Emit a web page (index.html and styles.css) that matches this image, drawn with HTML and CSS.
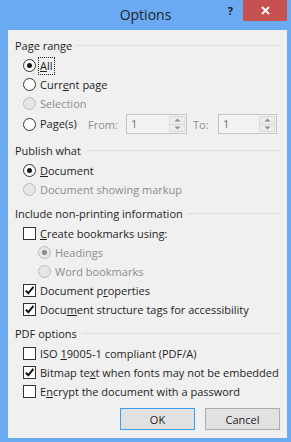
FILE: index.html
```html
<!DOCTYPE html>
<html>
<head>
<meta charset="utf-8">
<link rel="stylesheet" href="styles.css">
</head>
<body>
<div class="window">
  <div class="titlebar">
    <div class="title">Options</div>
    <div class="controls">
      <span class="help">?</span>
      <span class="close"><svg width="9" height="9" viewBox="0 0 9 9"><path d="M1 1L8 8M8 1L1 8" stroke="#fff" stroke-width="1.8"/></svg></span>
    </div>
  </div>
  <div class="client">
    <section class="group">
      <div class="group-head"><span>Page range</span><span class="rule"></span></div>
      <div class="row"><span class="radio checked"></span><span class="label focus"><u>A</u>ll</span></div>
      <div class="row"><span class="radio"></span><span class="label">Curr<u>e</u>nt page</span></div>
      <div class="row disabled"><span class="radio"></span><span class="label">Selection</span></div>
      <div class="row pages">
        <span class="radio"></span><span class="label pages-label">Pa<u>g</u>e(s)</span>
        <span class="dim from">From:</span>
        <span class="spin from-box"><span class="val">1</span><span class="btns"><span class="btn"><svg width="7" height="4" viewBox="0 0 7 4"><path d="M0.5 3.5L3.5 0.5L6.5 3.5Z" fill="#8e8e8e"/></svg></span><span class="btn"><svg width="7" height="4" viewBox="0 0 7 4"><path d="M0.5 0.5L3.5 3.5L6.5 0.5Z" fill="#8e8e8e"/></svg></span></span></span>
        <span class="dim to">To:</span>
        <span class="spin to-box"><span class="val">1</span><span class="btns"><span class="btn"><svg width="7" height="4" viewBox="0 0 7 4"><path d="M0.5 3.5L3.5 0.5L6.5 3.5Z" fill="#8e8e8e"/></svg></span><span class="btn"><svg width="7" height="4" viewBox="0 0 7 4"><path d="M0.5 0.5L3.5 3.5L6.5 0.5Z" fill="#8e8e8e"/></svg></span></span></span>
      </div>
    </section>
    <section class="group g2">
      <div class="group-head"><span>Publish what</span><span class="rule"></span></div>
      <div class="row"><span class="radio checked"></span><span class="label"><u>D</u>ocument</span></div>
      <div class="row disabled"><span class="radio"></span><span class="label">Document showing markup</span></div>
    </section>
    <section class="group g3">
      <div class="group-head"><span>Include non-printing information</span><span class="rule"></span></div>
      <div class="row"><span class="check"></span><span class="label"><u>C</u>reate bookmarks using:</span></div>
      <div class="row sub disabled"><span class="radio checked"></span><span class="label">Headings</span></div>
      <div class="row sub disabled"><span class="radio"></span><span class="label">Word bookmarks</span></div>
      <div class="row"><span class="check checked"><svg width="11" height="11" viewBox="0 0 11 11"><path d="M1.8 5.6L4.3 8.3L9.4 1.8" fill="none" stroke="#111" stroke-width="2"/></svg></span><span class="label">Document p<u>r</u>operties</span></div>
      <div class="row"><span class="check checked"><svg width="11" height="11" viewBox="0 0 11 11"><path d="M1.8 5.6L4.3 8.3L9.4 1.8" fill="none" stroke="#111" stroke-width="2"/></svg></span><span class="label">Docu<u>m</u>ent structure tags for accessibility</span></div>
    </section>
    <section class="group g4">
      <div class="group-head"><span>PDF options</span><span class="rule"></span></div>
      <div class="row"><span class="check"></span><span class="label">ISO <u>1</u>9005-1 compliant (PDF/A)</span></div>
      <div class="row"><span class="check checked"><svg width="11" height="11" viewBox="0 0 11 11"><path d="M1.8 5.6L4.3 8.3L9.4 1.8" fill="none" stroke="#111" stroke-width="2"/></svg></span><span class="label">Bitmap te<u>x</u>t when fonts may not be embedded</span></div>
      <div class="row"><span class="check"></span><span class="label">E<u>n</u>crypt the document with a password</span></div>
    </section>
    <div class="buttons">
      <button class="btn-push default">OK</button>
      <button class="btn-push">Cancel</button>
    </div>
  </div>
</div>
</body>
</html>
```
FILE: styles.css
```css
* { box-sizing: border-box; }
html, body { margin: 0; padding: 0; }
body {
  background: #69aaf2;
  font-family: "Open Sans", "Noto Sans", sans-serif;
  font-size: 11px;
  color: #1e1e1e;
}
.window {
  width: 291px;
  height: 442px;
  display: flex;
  flex-direction: column;
}
.titlebar {
  height: 30px;
  flex: none;
  display: grid;
  grid-template-columns: 1fr auto 1fr;
  align-items: start;
}
.title {
  grid-column: 2;
  font-size: 14px;
  line-height: 29px;
  color: #262626;
}
.controls {
  grid-column: 3;
  display: flex;
  justify-content: flex-end;
  align-items: flex-start;
  padding-right: 4px;
}
.help {
  font-weight: bold;
  font-size: 11px;
  line-height: 12px;
  margin-top: 5px;
  margin-right: 10px;
  color: #1a1a1a;
}
.close {
  width: 44px;
  height: 21px;
  background: #c75050;
  display: flex;
  align-items: center;
  justify-content: center;
}
.client {
  flex: 1;
  margin: 0 4px 4px 8px;
  background: #f0f0f0;
  padding: 5px 7px 0 7px;
  display: flex;
  flex-direction: column;
}
.group { display: flex; flex-direction: column; }
.g2 { margin-top: 6px; }
.g3, .g4 { margin-top: 4px; }
.group-head {
  display: flex;
  align-items: center;
  height: 20px;
  gap: 5px;
  margin-bottom: 1px;
  white-space: nowrap;
}
.group-head .rule {
  flex: 1;
  height: 1px;
  background: #dcdcdc;
}
.row {
  display: flex;
  align-items: center;
  height: 19px;
  padding-left: 8px;
  white-space: nowrap;
}
.row.sub { padding-left: 23px; }
.label { line-height: 16px; }
.label.focus {
  border: 1px dotted #222;
  margin-left: -2px;
  padding: 0 1px;
  line-height: 16px;
}
.radio {
  width: 13px;
  height: 13px;
  border-radius: 50%;
  border: 1px solid #333;
  background: #fff;
  margin-right: 4px;
  flex: none;
  display: flex;
  align-items: center;
  justify-content: center;
}
.radio.checked::after {
  content: "";
  width: 5px;
  height: 5px;
  border-radius: 50%;
  background: #1a1a1a;
}
.check {
  width: 13px;
  height: 13px;
  border: 1px solid #333;
  background: #fff;
  margin-right: 4px;
  flex: none;
  display: flex;
  align-items: center;
  justify-content: center;
}
.disabled { color: #8d8d8d; }
.disabled .radio {
  border-color: #bcbcbc;
  background: #e6e6e6;
}
.disabled .radio.checked::after { background: #8a8a8a; }
.row.pages { height: 20px; margin-top: 1px; }
.pages-label { width: 48px; }
.dim { color: #8d8d8d; }
.from { width: 38px; }
.to { width: 25px; margin-left: 6px; }
.spin {
  display: flex;
  height: 20px;
  border: 1px solid #c4c4c4;
  background: #f3f3f3;
}
.from-box { width: 61px; }
.to-box { width: 59px; }
.spin .val {
  flex: 1;
  padding-left: 4px;
  line-height: 18px;
  color: #6e6e78;
}
.spin .btns {
  width: 18px;
  display: flex;
  flex-direction: column;
  padding: 1px;
  gap: 0;
}
.spin .btn {
  flex: 1;
  display: flex;
  align-items: center;
  justify-content: center;
  border: 1px solid #dadada;
  background: #ececec;
}
.spin .btn + .btn { border-top: none; }
.buttons {
  display: flex;
  justify-content: flex-end;
  gap: 10px;
  margin-top: 7px;
}
.btn-push {
  width: 75px;
  height: 22px;
  font-family: "Open Sans", "Noto Sans", sans-serif;
  font-size: 11px;
  color: #1e1e1e;
  background: #e1e1e1;
  border: 1px solid #adadad;
  padding: 0;
  margin: 0;
}
.btn-push.default {
  border-color: #3c9ef0;
}
```
